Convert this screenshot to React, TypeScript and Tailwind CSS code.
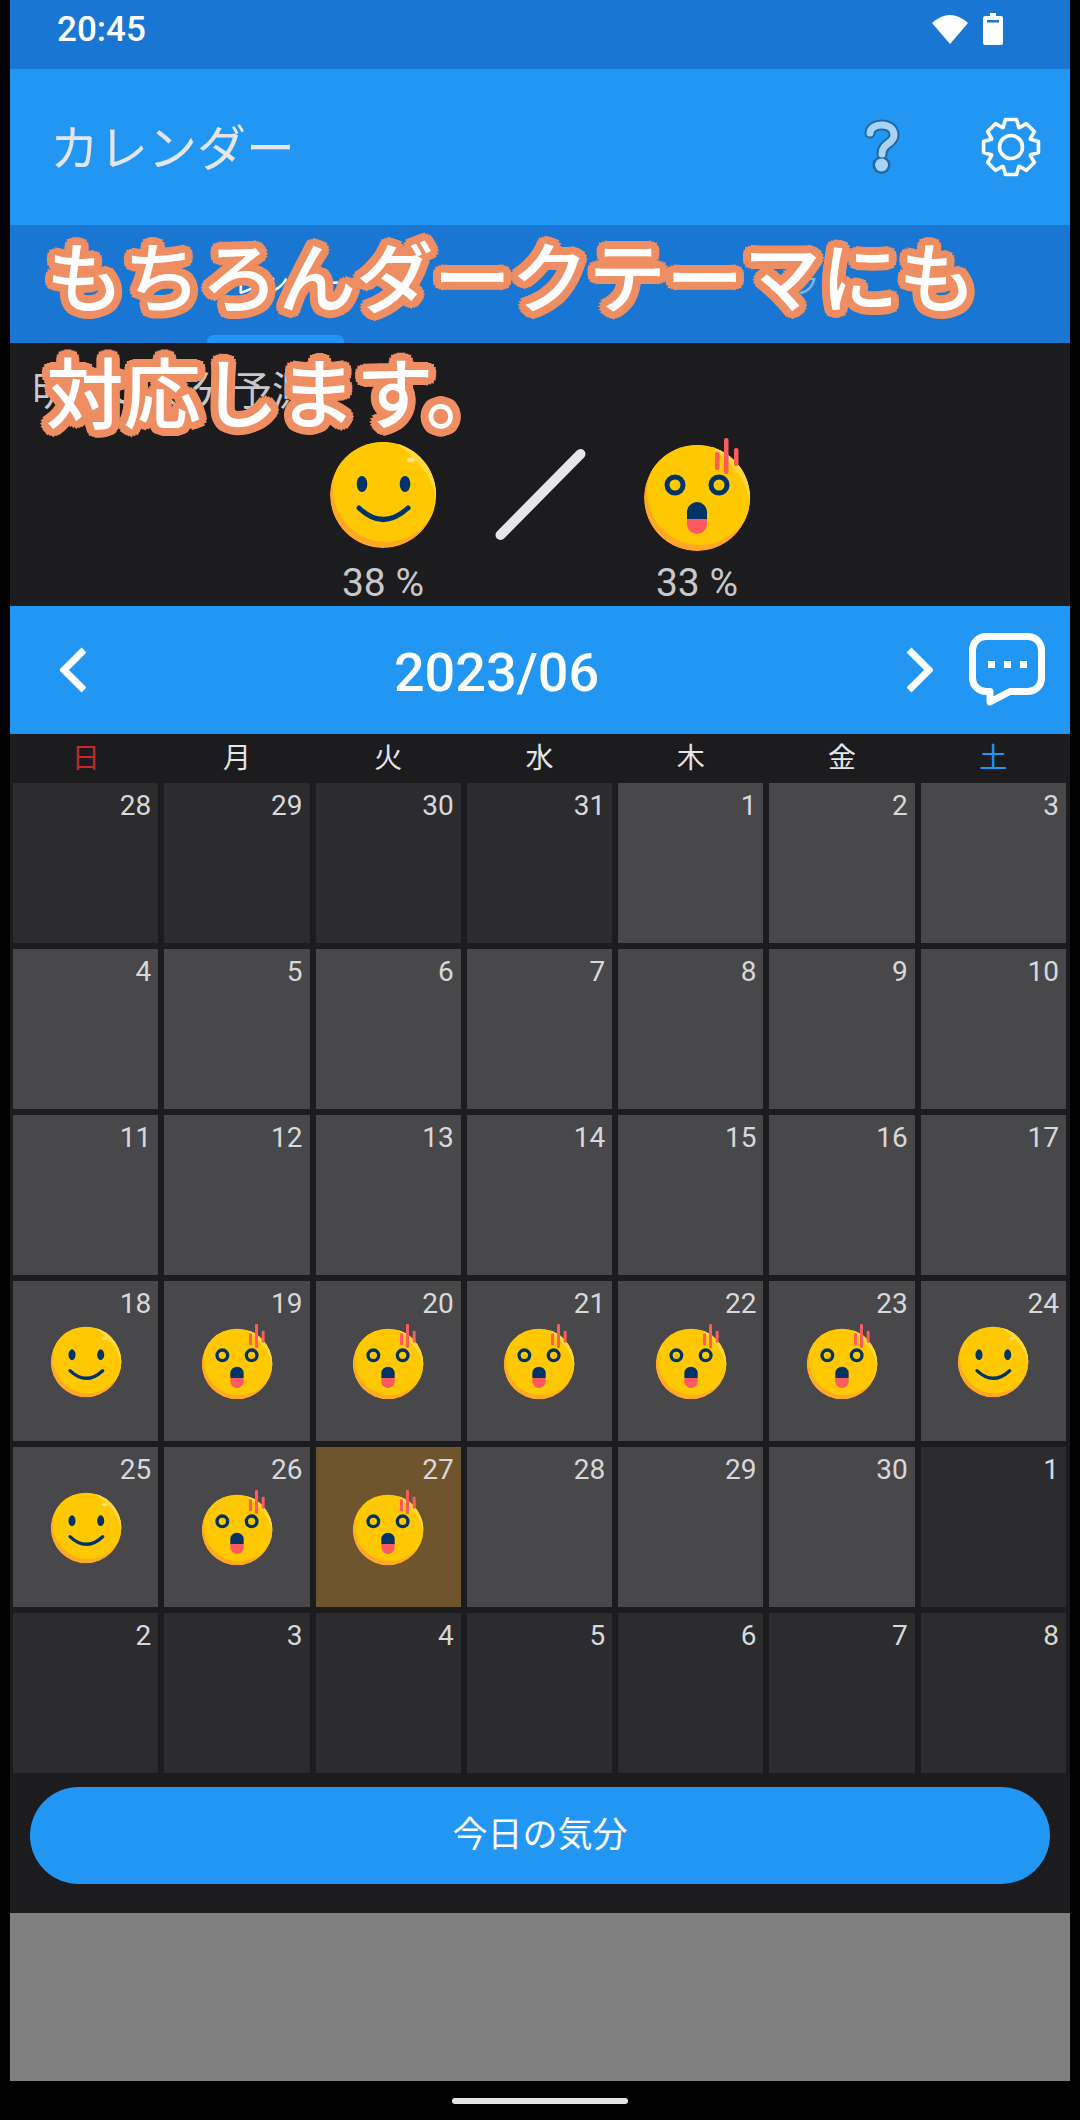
import React, { useId } from 'react';

const FONT = "font-['Roboto','Noto_Sans_CJK_JP',sans-serif]";
const OUTLINE =
  '[text-shadow:8px_0_0_#ef8e62,7.4px_3.1px_0_#ef8e62,5.7px_5.7px_0_#ef8e62,3.1px_7.4px_0_#ef8e62,0_8px_0_#ef8e62,-3.1px_7.4px_0_#ef8e62,-5.7px_5.7px_0_#ef8e62,-7.4px_3.1px_0_#ef8e62,-8px_0_0_#ef8e62,-7.4px_-3.1px_0_#ef8e62,-5.7px_-5.7px_0_#ef8e62,-3.1px_-7.4px_0_#ef8e62,0_-8px_0_#ef8e62,3.1px_-7.4px_0_#ef8e62,5.7px_-5.7px_0_#ef8e62,7.4px_-3.1px_0_#ef8e62,5px_0_0_#ef8e62,-5px_0_0_#ef8e62,0_5px_0_#ef8e62,0_-5px_0_#ef8e62]';

type Mood = 'smile' | 'shock' | null;
type Day = { n: number; dim?: boolean; mood?: Mood; today?: boolean };

const weekDays = ['日', '月', '火', '水', '木', '金', '土'];

const days: Day[] = [
  { n: 28, dim: true }, { n: 29, dim: true }, { n: 30, dim: true }, { n: 31, dim: true },
  { n: 1 }, { n: 2 }, { n: 3 }, { n: 4 }, { n: 5 }, { n: 6 }, { n: 7 }, { n: 8 }, { n: 9 }, { n: 10 },
  { n: 11 }, { n: 12 }, { n: 13 }, { n: 14 }, { n: 15 }, { n: 16 }, { n: 17 },
  { n: 18, mood: 'smile' }, { n: 19, mood: 'shock' }, { n: 20, mood: 'shock' }, { n: 21, mood: 'shock' },
  { n: 22, mood: 'shock' }, { n: 23, mood: 'shock' }, { n: 24, mood: 'smile' },
  { n: 25, mood: 'smile' }, { n: 26, mood: 'shock' }, { n: 27, mood: 'shock', today: true },
  { n: 28 }, { n: 29 }, { n: 30 }, { n: 1, dim: true },
  { n: 2, dim: true }, { n: 3, dim: true }, { n: 4, dim: true }, { n: 5, dim: true },
  { n: 6, dim: true }, { n: 7, dim: true }, { n: 8, dim: true },
];

// shared face: orange rim lower left, light rim upper right
const Face = ({ cy, id }: { cy: number; id: string }) => (
  <>
    <defs>
      <clipPath id={id}>
        <circle cx="60" cy={cy} r="53" />
      </clipPath>
    </defs>
    <g clipPath={`url(#${id})`}>
      <circle cx="60" cy={cy} r="53" fill="#ffa726" />
      <circle cx="63" cy={cy - 6} r="53" fill="#ffc800" />
      <path d={`M72 ${cy - 53}A53 53 0 0 1 113 ${cy + 6}C110 ${cy - 18} 98 ${cy - 32} 72 ${cy - 53}Z`} fill="#ffd83a" />
    </g>
  </>
);

const SmileFace = ({ className }: { className: string }) => {
  const id = useId();
  return (
    <svg viewBox="0 0 120 120" className={className}>
      <Face cy={57} id={id} />
      <ellipse cx="88" cy="22" rx="4" ry="2.5" fill="#ffe27a" />
      <ellipse cx="39" cy="46" rx="5.3" ry="8" fill="#003366" />
      <ellipse cx="82" cy="46" rx="5.3" ry="8" fill="#003366" />
      <path d="M36 70Q60 93 85 70" fill="none" stroke="#003366" strokeWidth="5" strokeLinecap="round" />
    </svg>
  );
};

const ShockFace = ({ className }: { className: string }) => {
  const id = useId();
  return (
    <svg viewBox="0 0 120 120" className={className}>
      <Face cy={60} id={id} />
      <circle cx="38" cy="47" r="8" fill="none" stroke="#003366" strokeWidth="5" />
      <circle cx="82" cy="47" r="8" fill="none" stroke="#003366" strokeWidth="5" />
      <path d="M50 81V74a10 10 0 0 1 20 0V81Z" fill="#003366" />
      <path d="M50 81H70V86a10 10 0 0 1-20 0Z" fill="#ff5a5f" />
      <rect x="78" y="14" width="4.5" height="18" rx="2" fill="#ff5a5f" />
      <rect x="87" y="0" width="4.5" height="36" rx="2" fill="#ff5a5f" />
      <rect x="97" y="10" width="4.5" height="18" rx="2" fill="#ff5a5f" />
    </svg>
  );
};

// eight tooth gear outline
const gearPath = (() => {
  const pts: string[] = [];
  for (let i = 0; i < 8; i++) {
    const a = (i * Math.PI) / 4 - Math.PI / 2;
    const p = (r: number, d: number) =>
      `${(30 + r * Math.cos(a + d)).toFixed(2)} ${(30 + r * Math.sin(a + d)).toFixed(2)}`;
    pts.push(p(21, -0.38), p(28, -0.2), p(28, 0.2), p(21, 0.38));
  }
  return `M${pts.join('L')}Z`;
})();

const Cell = ({ day }: { day: Day }) => {
  const bg = day.today ? 'bg-[#6f552e]' : day.dim ? 'bg-[#2c2c2e]' : 'bg-[#48484a]';
  return (
    <div className={`h-[160px] ${bg} pt-[7px] flex flex-col items-center`}>
      <div className="self-end pr-[7px] text-[28px] leading-[32px] text-[#d8d8dc]">{day.n}</div>
      {day.mood === 'smile' && <SmileFace className="w-[80px] h-[80px] mt-[4px]" />}
      {day.mood === 'shock' && <ShockFace className="w-[80px] h-[80px] mt-[4px]" />}
    </div>
  );
};

export default function App() {
  return (
    <div className={`relative w-[1080px] h-[2120px] bg-black px-[10px] overflow-hidden ${FONT}`}>
      {/* status bar */}
      <div className="h-[69px] bg-[#1976d2] flex items-center justify-between pl-[47px] pr-[67px] pb-[11px]">
        <span className="text-[35px] font-medium leading-none text-white">20:45</span>
        <div className="flex items-center gap-[14px]">
          <svg viewBox="0 0 38 32" className="w-[38px] h-[32px]">
            <path d="M19 31L1 10Q19-6 37 10Z" fill="#fff" />
          </svg>
          <svg viewBox="0 0 20 32" className="w-[20px] h-[32px]">
            <path d="M7 0H13V3H18a2 2 0 0 1 2 2V30a2 2 0 0 1-2 2H2a2 2 0 0 1-2-2V5a2 2 0 0 1 2-2H7Z" fill="#fff" />
            <rect x="4" y="7" width="12" height="2.5" fill="#1976d2" />
          </svg>
        </div>
      </div>

      {/* toolbar */}
      <div className="h-[156px] bg-[#2196f3] flex items-center pl-[40px] pr-[29px]">
        <h1 className="flex-1 text-[49px] leading-none font-normal text-[#e5e5ea] pt-[5px]">カレンダー</h1>
        <svg viewBox="0 0 36 56" className="w-[36px] h-[56px] mr-[81px]">
          <path d="M6 14C7 3 30 3 30 16C30 25 18 24 18 35" fill="none" stroke="#1f6aa5" strokeWidth="11" strokeLinecap="round" />
          <circle cx="17.5" cy="46" r="9" fill="#1f6aa5" />
          <path d="M6 14C7 3 30 3 30 16C30 25 18 24 18 35" fill="none" stroke="#a9d3f5" strokeWidth="7" strokeLinecap="round" />
          <circle cx="17.5" cy="46" r="6.5" fill="#a9d3f5" />
        </svg>
        <svg viewBox="0 0 60 60" className="w-[60px] h-[60px]">
          <path d={gearPath} fill="none" stroke="#fff" strokeWidth="3.6" strokeLinejoin="round" />
          <circle cx="30" cy="30" r="11.5" fill="none" stroke="#fff" strokeWidth="3.6" />
        </svg>
      </div>

      {/* tabs */}
      <div className="h-[118px] bg-[#1976d2] grid grid-cols-2">
        <div className="relative flex items-center justify-center text-[28px] text-white pt-[2px]">
          カレンダー
          <div className="absolute bottom-0 left-[197px] w-[137px] h-[8px] rounded-t-[6px] bg-[#2196f3]" />
        </div>
        <div className="flex items-center justify-center text-[28px] text-[#7fb6e6]">グラフ</div>
      </div>

      {/* forecast */}
      <div className="h-[263px] bg-[#1c1c1e] pt-[25px]">
        <div className="pl-[22px] text-[40px] leading-[48px] text-[#c7c7cc]">明日の気分予測</div>
        <div className="mt-[22px] flex justify-center">
          <div className="w-[157px] flex flex-col items-center">
            <SmileFace className="w-[120px] h-[120px]" />
            <span className="text-[39px] leading-[44px] mt-[3px] text-[#c7c7cc]">38 %</span>
          </div>
          <svg viewBox="0 0 157 120" className="w-[157px] h-[120px]">
            <path d="M38.5 97L118.5 16" stroke="#e5e5ea" strokeWidth="10" strokeLinecap="round" />
          </svg>
          <div className="w-[157px] flex flex-col items-center">
            <ShockFace className="w-[120px] h-[120px]" />
            <span className="text-[39px] leading-[44px] mt-[3px] text-[#c7c7cc]">33 %</span>
          </div>
        </div>
      </div>

      {/* month header */}
      <div className="h-[128px] bg-[#2196f3] flex items-center pl-[50px] pr-[25px]">
        <svg viewBox="0 0 26 46" className="w-[26px] h-[46px]">
          <path d="M24 3L4 23L24 43" fill="none" stroke="#fff" strokeWidth="7" />
        </svg>
        <div className="flex-1 pt-[5px] text-center text-[54px] leading-none font-medium text-white">2023/06</div>
        <svg viewBox="0 0 26 46" className="w-[26px] h-[46px] mr-[36px]">
          <path d="M2 3L22 23L2 43" fill="none" stroke="#fff" strokeWidth="7" />
        </svg>
        <svg viewBox="0 0 76 74" className="w-[76px] h-[74px]">
          <path d="M17 3.5H59a13.5 13.5 0 0 1 13.5 13.5V45a13.5 13.5 0 0 1-13.5 13.5H41L21 69V58.5H17a13.5 13.5 0 0 1-13.5-13.5V17a13.5 13.5 0 0 1 13.5-13.5Z" fill="none" stroke="#fff" strokeWidth="7" strokeLinejoin="round" />
          <rect x="19" y="28" width="7" height="7" fill="#fff" />
          <rect x="35" y="28" width="7" height="7" fill="#fff" />
          <rect x="51" y="28" width="7" height="7" fill="#fff" />
        </svg>
      </div>

      {/* calendar */}
      <div className="bg-[#1c1c1e] pl-[3px] pr-[4px]">
        <div className="h-[49px] grid grid-cols-7 gap-x-[6px] items-center text-center text-[28px] leading-none">
          {weekDays.map((d, i) => (
            <span key={d} className={i === 0 ? 'text-[#c62828]' : i === 6 ? 'text-[#2196f3]' : 'text-[#e5e5ea]'}>
              {d}
            </span>
          ))}
        </div>
        <div className="grid grid-cols-7 gap-[6px]">
          {days.map((d, i) => (
            <Cell key={i} day={d} />
          ))}
        </div>
      </div>

      {/* button */}
      <div className="h-[140px] bg-[#1c1c1e] px-[20px] pt-[14px]">
        <button className="w-full h-[97px] rounded-full bg-[#2196f3] text-[35px] text-white pt-[2px]">今日の気分</button>
      </div>

      {/* ad space */}
      <div className="h-[168px] bg-[#808080]" />
      <div className="h-[38px] flex justify-center pt-[17px]">
        <div className="w-[176px] h-[6px] rounded-full bg-[#e5e5e5]" />
      </div>

      {/* caption over the screen */}
      <div className={`absolute left-[46px] top-[223px] text-[77.5px] leading-[116px] font-medium text-white whitespace-nowrap ${OUTLINE}`}>
        <div>もちろんダークテーマにも</div>
        <div>対応します。</div>
      </div>
    </div>
  );
}
